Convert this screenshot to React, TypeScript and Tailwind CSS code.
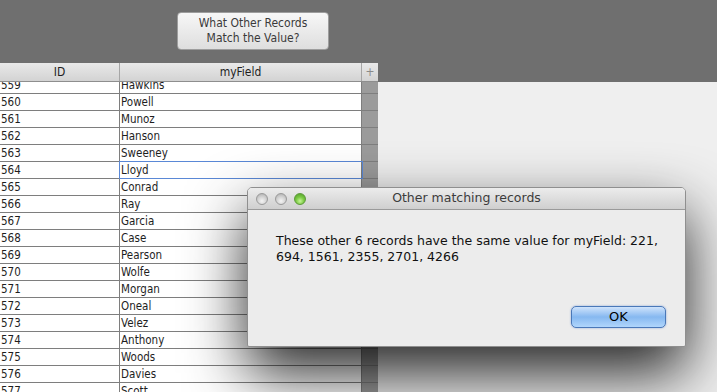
import React from 'react'

const rows: [number, string][] = [
  [559, 'Hawkins'],
  [560, 'Powell'],
  [561, 'Munoz'],
  [562, 'Hanson'],
  [563, 'Sweeney'],
  [564, 'Lloyd'],
  [565, 'Conrad'],
  [566, 'Ray'],
  [567, 'Garcia'],
  [568, 'Case'],
  [569, 'Pearson'],
  [570, 'Wolfe'],
  [571, 'Morgan'],
  [572, 'Oneal'],
  [573, 'Velez'],
  [574, 'Anthony'],
  [575, 'Woods'],
  [576, 'Davies'],
  [577, 'Scott'],
]

const Light = ({ green }: { green?: boolean }) => (
  <span
    className={
      green
        ? 'block h-[12px] w-[12px] rounded-full border border-[#5d9a3a] bg-[radial-gradient(circle_at_50%_70%,#c8f59a_0%,#7ccb45_45%,#4f9a25_100%)]'
        : 'block h-[12px] w-[12px] rounded-full border border-[#9a9a9a] bg-[radial-gradient(circle_at_50%_70%,#f4f4f4_0%,#d2d2d2_50%,#a9a9a9_100%)]'
    }
  />
)

export default function App() {
  return (
    <div className="relative h-[392px] w-[717px] overflow-hidden bg-[#efefef] font-['DejaVu_Sans_Condensed','DejaVu_Sans',sans-serif] text-[11.5px] text-[#1e1e1e]">
      {/* toolbar */}
      <div className="flex h-[63px] bg-[#6f6f6f] pt-[12px] pl-[177px]">
        <button className="flex h-[38px] w-[152px] flex-col items-center justify-center rounded-[4px] border border-[#9d9d9d] bg-gradient-to-b from-[#f7f7f7] to-[#dedede] text-[12px] leading-[15px] text-[#3a3a3a]">
          <span>What Other Records</span>
          <span>Match the Value?</span>
        </button>
      </div>

      <div className="flex">
        {/* table */}
        <div className="flex w-[378px] flex-col">
          <div className="flex h-[19px] border-b border-[#8e8e8e] bg-gradient-to-b from-[#e9e9e9] to-[#d3d3d3] text-[12px]">
            <div className="flex w-[120px] items-center justify-center border-r border-[#a6a6a6]">ID</div>
            <div className="flex w-[242px] items-center justify-center border-r border-[#a6a6a6]">myField</div>
            <div className="flex w-[16px] items-center justify-center text-[#8a8a8a]">+</div>
          </div>
          <div className="h-[310px] overflow-hidden">
            <div className="-mt-[5px]">
              {rows.map(([id, name]) => (
                <div key={id} className="flex h-[17px] border-b border-[#7e7e7e]">
                  <div className="flex w-[120px] items-center border-r border-[#7e7e7e] bg-white pl-[1px] pt-[1px]">{id}</div>
                  <div
                    className={
                      id === 564
                        ? 'relative z-10 flex w-[242px] items-center border-r border-[#7e7e7e] bg-white pl-[1px] pt-[1px] outline outline-1 outline-[#5a88d6]'
                        : 'flex w-[242px] items-center border-r border-[#7e7e7e] bg-white pl-[1px] pt-[1px]'
                    }
                  >
                    {name}
                  </div>
                  <div className="w-[16px] bg-[#9b9b9b]" />
                </div>
              ))}
            </div>
          </div>
        </div>
        {/* right pane */}
        <div className="flex flex-1 flex-col">
          <div className="h-[19px] bg-[#6f6f6f]" />
          <div className="flex-1 bg-[#efefef]" />
        </div>
      </div>

      {/* dialog */}
      <div className="absolute left-[247px] top-[187px] z-20 flex h-[160px] w-[439px] flex-col overflow-hidden rounded-t-[5px] rounded-b-[2px] border border-[#8f8f8f] bg-[#ececec] shadow-[0_26px_60px_rgba(0,0,0,0.85)]">
        <div className="relative flex h-[22px] items-center border-b border-[#9a9a9a] bg-gradient-to-b from-[#ececec] to-[#cfcfcf]">
          <div className="absolute left-[8px] top-[5px] flex gap-[7px]">
            <Light />
            <Light />
            <Light green />
          </div>
          <div className="w-full text-center font-['DejaVu_Sans',sans-serif] text-[12.5px] text-[#3c3c3c]">Other matching records</div>
        </div>
        <div className="flex flex-1 flex-col px-[28px] pt-[23px] pb-[18px] font-['DejaVu_Sans',sans-serif] text-[12.5px] leading-[16px] text-[#111]">
          <p className="whitespace-nowrap">
            These other 6 records have the same value for myField: 221,
            <br />
            694, 1561, 2355, 2701, 4266
          </p>
          <div className="mt-auto flex justify-end">
            <button className="-mr-[9px] flex h-[22px] w-[95px] items-center justify-center rounded-[5px] border border-[#4a78b8] bg-gradient-to-b from-[#cfe3fb] via-[#86b8f0] to-[#b0d6fc] text-[13px] text-black shadow-[0_0_2px_rgba(60,110,200,0.6)]">
              OK
            </button>
          </div>
        </div>
      </div>
    </div>
  )
}
